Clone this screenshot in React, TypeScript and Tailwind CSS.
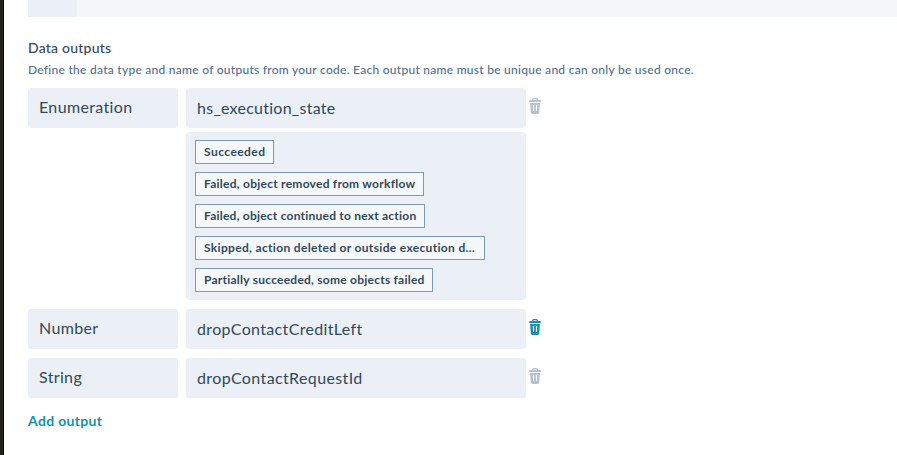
const tags = [
  { label: "Succeeded", width: "w-[79px]", tracking: "tracking-[0.45px]" },
  { label: "Failed, object removed from workflow", width: "w-[229px]", tracking: "tracking-[0.25px]" },
  { label: "Failed, object continued to next action", width: "w-[230px]", tracking: "tracking-[0.22px]" },
  { label: "Skipped, action deleted or outside execution d…", width: "w-[290px]", tracking: "tracking-[0.33px]" },
  { label: "Partially succeeded, some objects failed", width: "w-[238px]", tracking: "tracking-[0.24px]" },
];

function TrashIcon({ className }: { className: string }) {
  return (
    <svg width="12" height="16" viewBox="0 0 12 16" className={className}>
      <path
        d="M3.7 2.2V1.6Q3.7 0.7 4.6 0.7h2.8Q8.3 0.7 8.3 1.6v0.6"
        fill="none"
        stroke="currentColor"
        strokeWidth="1.3"
      />
      <path d="M1.2 2h9.6q1 0 1 1v1H0.2V3q0-1 1-1z" fill="currentColor" />
      <path
        fillRule="evenodd"
        d="M1.1 5h9.8l-0.7 9.2q-0.2 1.7-1.7 1.7h-5q-1.5 0-1.7-1.7zM3.8 6.8l0.3 6.2h1V6.8zM6.9 6.8v6.2h1l0.3-6.2z"
        fill="currentColor"
      />
    </svg>
  );
}

type FieldRowProps = {
  type: string;
  name: string;
  tracking: string;
  iconColor: string;
};

function FieldRow({ type, name, tracking, iconColor }: FieldRowProps) {
  return (
    <div className="flex h-10">
      <div className="h-10 w-[150px] rounded-[3px] bg-[#eaf0f6] pl-[11px] text-base leading-[37px] tracking-[0.35px]">
        {type}
      </div>
      <div className={`ml-2 h-10 w-[340px] rounded-[3px] bg-[#eaf0f6] pl-[11px] text-base leading-[39px] ${tracking}`}>
        {name}
      </div>
      <TrashIcon className={`ml-[2.6px] mt-[9.8px] ${iconColor}`} />
    </div>
  );
}

export default function App() {
  return (
    <div className="flex h-[455px] w-[897px] overflow-hidden bg-white font-['Lato','Open_Sans',sans-serif] text-[#33475b]">
      <div className="w-1 shrink-0 border-r border-[#0c0b0a] bg-[#24211e]" />
      <main className="flex flex-1 flex-col pl-6">
        <div className="flex h-[17px] shrink-0">
          <div className="w-[49px] bg-[#eaf0f6]" />
          <div className="flex-1 bg-[#f5f8fb]" />
        </div>
        <h2 className="mt-[21px] h-5 text-sm font-medium leading-5 tracking-[0.22px]">Data outputs</h2>
        <p className="mt-[3px] h-[18px] whitespace-nowrap text-xs font-medium leading-[18px] tracking-[0.265px] text-[#516f90]">
          Define the data type and name of outputs from your code. Each output name must be unique and can only be used once.
        </p>
        <div className="mt-[9px]">
          <FieldRow type="Enumeration" name="hs_execution_state" tracking="tracking-[0.26px]" iconColor="text-[#b0c1d4]" />
          <div className="ml-[158px] mt-1 flex h-[168px] w-[340px] flex-col gap-2 rounded-[3px] bg-[#eaf0f6] pl-[9px] pt-2">
            {tags.map((tag) => (
              <div
                key={tag.label}
                className={`h-6 whitespace-nowrap border border-[#7c98b6] bg-[#f5f8fa] pl-2 text-xs font-bold leading-[22px] ${tag.width} ${tag.tracking}`}
              >
                {tag.label}
              </div>
            ))}
          </div>
        </div>
        <div className="mt-[9px] flex flex-col gap-[9px]">
          <FieldRow type="Number" name="dropContactCreditLeft" tracking="tracking-[0.34px]" iconColor="text-[#1591ae]" />
          <FieldRow type="String" name="dropContactRequestId" tracking="tracking-[0.38px]" iconColor="text-[#b0c1d4]" />
        </div>
        <button className="mt-[13px] h-5 self-start text-sm font-bold leading-5 tracking-[0.32px] text-[#1591ae]">Add output</button>
      </main>
    </div>
  );
}
